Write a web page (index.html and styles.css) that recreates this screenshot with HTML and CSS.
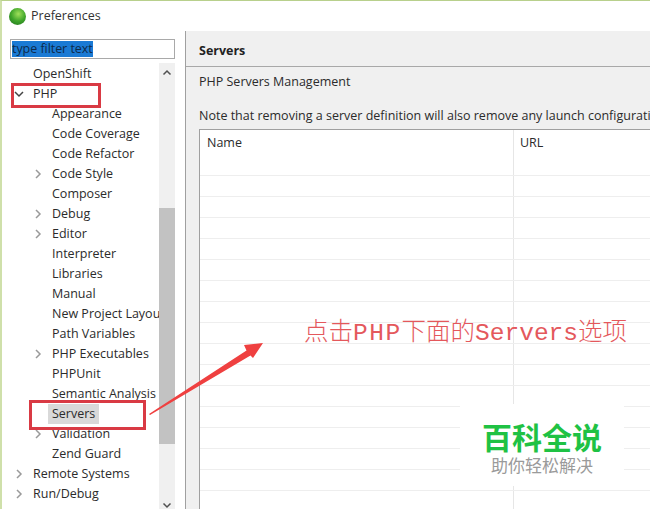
FILE: index.html
```html
<!DOCTYPE html>
<html lang="en">
<head>
<meta charset="utf-8">
<title>Preferences</title>
<link rel="stylesheet" href="styles.css">
</head>
<body>
<div class="window">
  <header class="titlebar">
    <span class="app-icon"></span>
    <span class="title">Preferences</span>
  </header>
  <div class="content">
    <aside class="sidebar">
      <div class="filter"><span class="filter-sel">type filter text</span></div>
      <div class="tree-wrap">
        <ul class="tree">
          <li class="l1">OpenShift</li>
          <li class="l1"><svg class="chev open" viewBox="0 0 10 10"><path d="M1 3l4 4 4-4"/></svg>PHP</li>
          <li class="l2">Appearance</li>
          <li class="l2">Code Coverage</li>
          <li class="l2">Code Refactor</li>
          <li class="l2"><svg class="chev" viewBox="0 0 10 10"><path d="M3 1l4 4-4 4"/></svg>Code Style</li>
          <li class="l2">Composer</li>
          <li class="l2"><svg class="chev" viewBox="0 0 10 10"><path d="M3 1l4 4-4 4"/></svg>Debug</li>
          <li class="l2"><svg class="chev" viewBox="0 0 10 10"><path d="M3 1l4 4-4 4"/></svg>Editor</li>
          <li class="l2">Interpreter</li>
          <li class="l2">Libraries</li>
          <li class="l2">Manual</li>
          <li class="l2">New Project Layout</li>
          <li class="l2">Path Variables</li>
          <li class="l2"><svg class="chev" viewBox="0 0 10 10"><path d="M3 1l4 4-4 4"/></svg>PHP Executables</li>
          <li class="l2">PHPUnit</li>
          <li class="l2">Semantic Analysis</li>
          <li class="l2"><span class="selected">Servers</span></li>
          <li class="l2"><svg class="chev" viewBox="0 0 10 10"><path d="M3 1l4 4-4 4"/></svg>Validation</li>
          <li class="l2">Zend Guard</li>
          <li class="l1"><svg class="chev" viewBox="0 0 10 10"><path d="M3 1l4 4-4 4"/></svg>Remote Systems</li>
          <li class="l1"><svg class="chev" viewBox="0 0 10 10"><path d="M3 1l4 4-4 4"/></svg>Run/Debug</li>
        </ul>
        <div class="scrollbar">
          <svg class="sb-arrow" viewBox="0 0 10 10"><path d="M1.5 6.5L5 3l3.500 3.500"/></svg>
          <div class="sb-thumb"></div>
          <svg class="sb-arrow down" viewBox="0 0 10 10"><path d="M1.500 3.500L5 7l3.500-3.500"/></svg>
        </div>
      </div>
    </aside>
    <main class="pane">
      <h1 class="pane-title">Servers</h1>
      <p class="pane-sub">PHP Servers Management</p>
      <p class="pane-note">Note that removing a server definition will also remove any launch configurations</p>
      <div class="grid">
        <div class="row head"><div class="cell">Name</div><div class="cell">URL</div></div>
        <div class="row"><div class="cell"></div><div class="cell"></div></div>
        <div class="row"><div class="cell"></div><div class="cell"></div></div>
        <div class="row"><div class="cell"></div><div class="cell"></div></div>
        <div class="row"><div class="cell"></div><div class="cell"></div></div>
        <div class="row"><div class="cell"></div><div class="cell"></div></div>
        <div class="row"><div class="cell"></div><div class="cell"></div></div>
        <div class="row"><div class="cell"></div><div class="cell"></div></div>
        <div class="row"><div class="cell"></div><div class="cell"></div></div>
        <div class="row"><div class="cell"></div><div class="cell"></div></div>
        <div class="row"><div class="cell"></div><div class="cell"></div></div>
        <div class="row"><div class="cell"></div><div class="cell"></div></div>
        <div class="row"><div class="cell"></div><div class="cell"></div></div>
        <div class="row"><div class="cell"></div><div class="cell"></div></div>
        <div class="row"><div class="cell"></div><div class="cell"></div></div>
        <div class="row"><div class="cell"></div><div class="cell"></div></div>
        <div class="row"><div class="cell"></div><div class="cell"></div></div>
      </div>
    </main>
  </div>
  <div class="mark mark-php"></div>
  <div class="mark mark-servers"></div>
  <svg class="arrow" viewBox="0 0 650 509"><path d="M149 414L246.500 350.500 244 345 263 343 253 358 250.500 355.500 150 415Z"/></svg>
  <div class="callout">点击<span class="latin wide">PHP</span>下面的<span class="latin">Servers</span>选项</div>
  <div class="brand">
    <div class="brand-name">百科全说</div>
    <div class="brand-tag">助你轻松解决</div>
  </div>
</div>
</body>
</html>
```

FILE: styles.css
```css
* { box-sizing: border-box; }
html, body { margin: 0; padding: 0; }
body {
  width: 650px;
  height: 509px;
  overflow: hidden;
  background: #fff;
  font-family: "Open Sans", "Noto Sans", sans-serif;
  font-size: 12.500px;
  color: #2b2b2b;
}
.window {
  position: relative;
  width: 650px;
  height: 509px;
  overflow: hidden;
  display: flex;
  flex-direction: column;
  border-top: 1px solid #b8d08c;
  border-left: 2px solid #cfe0aa;
}
.titlebar {
  height: 30px;
  flex: none;
  display: flex;
  align-items: center;
  padding-left: 7px;
  gap: 5px;
  background: #fff;
}
.app-icon {
  width: 17px;
  height: 17px;
  border-radius: 50%;
  background: radial-gradient(circle at 55% 35%, #9fe05a 0%, #3fa52a 50%, #1d6b1c 100%);
}
.title { font-size: 12.500px; color: #333; padding-bottom: 2px; }
.content { flex: 1; display: flex; min-height: 0; }
.sidebar {
  width: 184px;
  flex: none;
  padding: 8px 10px 0 8px;
  display: flex;
  flex-direction: column;
  border-right: 1px solid #a0a0a0;
  background: #fff;
}
.filter {
  height: 20px;
  flex: none;
  border: 1px solid #a9a9a9;
  padding-left: 1px;
  display: flex;
  align-items: center;
  width: 165px;
}
.filter-sel {
  background: #1a7ad4;
  color: #0e2a4a;
  line-height: 16px;
  height: 16px;
  letter-spacing: -0.050px;
}
.tree-wrap { flex: 1; display: flex; min-height: 0; margin-top: 4px; }
.tree {
  list-style: none;
  margin: 0;
  padding: 1px 0 0;
  width: 149px;
  overflow: hidden;
  flex: none;
}
.tree li {
  position: relative;
  height: 20px;
  line-height: 20px;
  white-space: nowrap;
}
.l1 { padding-left: 23px; }
.l2 { padding-left: 42px; }
.chev {
  position: absolute;
  top: 5px;
  width: 10px;
  height: 10px;
  margin-left: -19px;
  fill: none;
  stroke: #9a9a9a;
  stroke-width: 1.500;
}
.chev.open { stroke: #444; }
.selected {
  display: inline-block;
  background: #d9d9d9;
  margin-left: -4px;
  padding: 0 4px;
  width: 51px;
}
.scrollbar {
  width: 16px;
  flex: none;
  background: #f0f0f0;
  display: flex;
  flex-direction: column;
  align-items: center;
}
.sb-arrow {
  width: 10px;
  height: 10px;
  flex: none;
  margin-top: 5px;
  fill: none;
  stroke: #505050;
  stroke-width: 1.500;
}
.sb-arrow.down { margin-top: 56px; }
.sb-thumb {
  width: 16px;
  height: 236px;
  flex: none;
  margin-top: 130px;
  background: #c2c2c2;
}
.pane {
  flex: 1;
  min-width: 0;
  background: #f0f0f0;
  padding-left: 13px;
  overflow: hidden;
}
.pane-title {
  margin: 0 0 0 -13px;
  padding-left: 13px;
  height: 36px;
  line-height: 40px;
  font-size: 12.500px;
  font-weight: 700;
  color: #222;
  border-bottom: 1px solid #a8a8a8;
}
.pane-sub {
  margin: 0;
  height: 31px;
  line-height: 30px;
  white-space: nowrap;
}
.pane-note {
  margin: 0;
  height: 31px;
  padding-top: 3px;
  line-height: 30px;
  white-space: nowrap;
}
.grid {
  width: 460px;
  background: #fff;
  border-top: 1px solid #a0a0a0;
  border-left: 1px solid #a0a0a0;
}
.row {
  display: grid;
  grid-template-columns: 314px 1fr;
  height: 21px;
  border-bottom: 1px solid #eeeeee;
}
.row.head { height: 46px; }
.cell { padding: 3px 6px 0 7px; line-height: 20px; }
.cell:first-child { border-right: 1px solid #e6e6e6; }
.cell:last-child { padding-left: 6px; }
.mark {
  position: absolute;
  border: 3px solid #d93a44;
}
.mark-php { left: 9px; top: 82px; width: 90px; height: 25px; }
.mark-servers { left: 27px; top: 399px; width: 117px; height: 30px; }
.arrow {
  position: absolute;
  left: -2px;
  top: -1px;
  width: 650px;
  height: 509px;
  fill: #ef4040;
}
.callout {
  position: absolute;
  left: 302px;
  top: 313px;
  white-space: nowrap;
  font-family: "Noto Sans CJK SC", "Noto Sans CJK TC", sans-serif;
  font-size: 24.500px;
  font-weight: 300;
  line-height: 32px;
  color: #e4585c;
}
.latin { font-family: "Liberation Mono", "Noto Sans CJK SC", monospace; font-weight: 400; }
.wide { letter-spacing: 1.500px; }
.brand {
  position: absolute;
  left: 458px;
  top: 403px;
  width: 164px;
  height: 82px;
  background: #fff;
  text-align: center;
  font-family: "Noto Sans CJK SC", "Noto Sans CJK TC", sans-serif;
}
.brand-name {
  margin-top: 14px;
  font-size: 30px;
  line-height: 36px;
  font-weight: 700;
  color: #1fc244;
}
.brand-tag {
  margin-top: 1px;
  font-size: 17px;
  line-height: 20px;
  color: #9a9a9a;
}
```
